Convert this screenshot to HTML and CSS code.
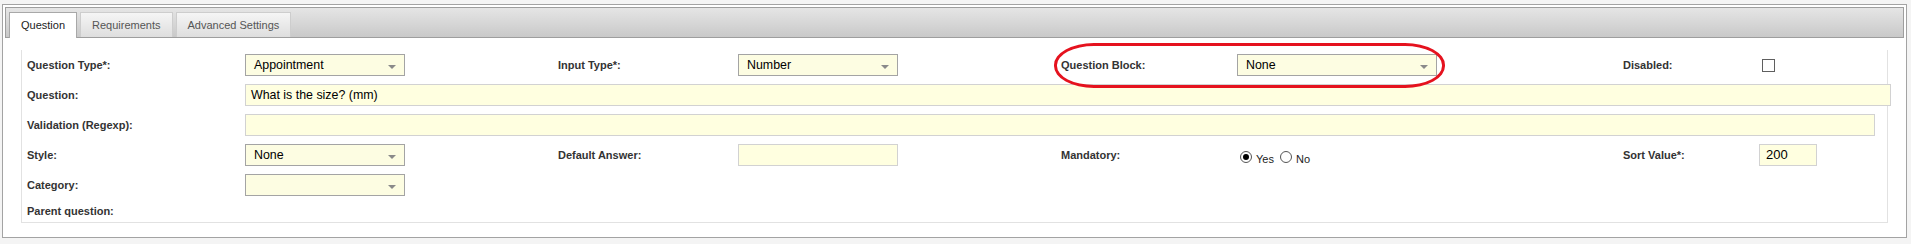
FILE: index.html
```html
<!DOCTYPE html>
<html lang="en">
<head>
  <meta charset="UTF-8">
  <title>Question</title>
  <link rel="stylesheet" href="styles.css">
</head>
<body>
  <div class="panel">
    <div class="tab-strip">
      <div class="tab active">Question</div>
      <div class="tab">Requirements</div>
      <div class="tab">Advanced Settings</div>
    </div>

    <div class="panel-body">
      <div class="form">
        <div class="highlight"></div>

        <div class="form-row">
          <label>Question Type*:</label>
          <div class="select"><span>Appointment</span><i class="arrow"></i></div>
          <label>Input Type*:</label>
          <div class="select"><span>Number</span><i class="arrow"></i></div>
          <label>Question Block:</label>
          <div class="select wide"><span>None</span><i class="arrow"></i></div>
          <label>Disabled:</label>
          <span class="checkbox"></span>
        </div>

        <div class="form-row">
          <label>Question:</label>
          <div class="text-input full">What is the size? (mm)</div>
        </div>

        <div class="form-row">
          <label>Validation (Regexp):</label>
          <div class="text-input regexp"></div>
        </div>

        <div class="form-row">
          <label>Style:</label>
          <div class="select"><span>None</span><i class="arrow"></i></div>
          <label>Default Answer:</label>
          <div class="text-input short"></div>
          <label>Mandatory:</label>
          <div class="radios">
            <span class="radio checked"></span><span class="radio-label">Yes</span>
            <span class="radio"></span><span class="radio-label">No</span>
          </div>
          <label>Sort Value*:</label>
          <div class="text-input sort">200</div>
        </div>

        <div class="form-row">
          <label>Category:</label>
          <div class="select"><span></span><i class="arrow"></i></div>
        </div>

        <div class="form-row last">
          <label>Parent question:</label>
        </div>
      </div>
    </div>
  </div>
</body>
</html>
```

FILE: styles.css
```css
:root {
  --panel-border: #a3a3a3;
  --field-bg: #ffffe0;
  --label-color: #333;
}
body {
  margin: 0;
  padding: 4px 4px 0 2px;
  background: #f4f4f4;
  font-family: "Liberation Sans", Arial, sans-serif;
}
.panel {
  border: 1px solid var(--panel-border);
  background: #fff;
  padding: 2px;
  height: 234px;
  box-sizing: border-box;
}
.tab-strip {
  display: flex;
  gap: 3px;
  height: 31px;
  box-sizing: border-box;
  padding: 4px 0 0 3px;
  border: 1px solid #9e9e9e;
  background: linear-gradient(#e5e5e5, #c9c9c9);
}
.tab {
  height: 25px;
  box-sizing: border-box;
  padding: 0 11px;
  line-height: 24px;
  font-size: 11px;
  color: #555;
  border: 1px solid #cdcdcd;
  border-bottom: none;
  background: linear-gradient(#f5f5f5, #dedede);
}
.tab.active {
  height: 26px;
  color: #222;
  background: #fff;
  border-color: #a8a8a8;
}
.panel-body {
  padding: 12px 16px 0 16px;
}
.form {
  position: relative;
  display: flex;
  flex-direction: column;
  gap: 8px;
  padding: 4px 0 4px 5px;
  border: 1px solid #e2e2e2;
  border-top: none;
}
.form-row {
  display: grid;
  grid-template-columns: 218px 313px 180px 323px 176px 386px 136px 1fr;
  align-items: center;
  height: 22px;
}
.form-row.last {
  height: 14px;
}
.form-row label {
  font-size: 11px;
  font-weight: bold;
  color: var(--label-color);
  white-space: nowrap;
}
.select {
  display: flex;
  justify-content: space-between;
  align-items: center;
  width: 160px;
  height: 22px;
  box-sizing: border-box;
  padding: 0 8px 0 8px;
  border: 1px solid #a4a4a4;
  background: #fdfde2;
  font-size: 12.4px;
  color: #000;
}
.select.wide {
  width: 200px;
}
.arrow {
  width: 0;
  height: 0;
  margin-top: 4px;
  border-left: 4px solid transparent;
  border-right: 4px solid transparent;
  border-top: 4px solid #8a8a8a;
}
.text-input {
  height: 22px;
  box-sizing: border-box;
  padding: 0 5px;
  line-height: 20px;
  border: 1px solid #d2d2d2;
  background: var(--field-bg);
  font-size: 12.4px;
  color: #000;
  white-space: nowrap;
}
.text-input.full {
  grid-column: 2 / -1;
  width: 1646px;
}
.text-input.regexp {
  grid-column: 2 / -1;
  width: 1630px;
}
.text-input.short {
  width: 160px;
}
.text-input.sort {
  width: 58px;
  padding-left: 6px;
  font-size: 13px;
}
.checkbox {
  width: 13px;
  height: 13px;
  box-sizing: border-box;
  margin-left: 3px;
  border: 1px solid #5f5f5f;
  background: #fff;
}
.radios {
  display: flex;
  align-items: center;
  margin-left: 3px;
  margin-top: 4px;
}
.radio {
  position: relative;
  width: 12px;
  height: 12px;
  box-sizing: border-box;
  border: 1px solid #555;
  border-radius: 50%;
  background: #fff;
}
.radio.checked::after {
  content: "";
  position: absolute;
  left: 2px;
  top: 2px;
  width: 6px;
  height: 6px;
  border-radius: 50%;
  background: #000;
}
.radio-label {
  font-size: 11px;
  color: #222;
  margin: 3px 6px 0 4px;
}
/* annotation drawn around the question block field */
.highlight {
  position: absolute;
  left: 1032px;
  top: -7px;
  width: 391px;
  height: 45px;
  box-sizing: border-box;
  border: 3px solid #e5121e;
  border-radius: 40px / 22px;
  pointer-events: none;
}
```
